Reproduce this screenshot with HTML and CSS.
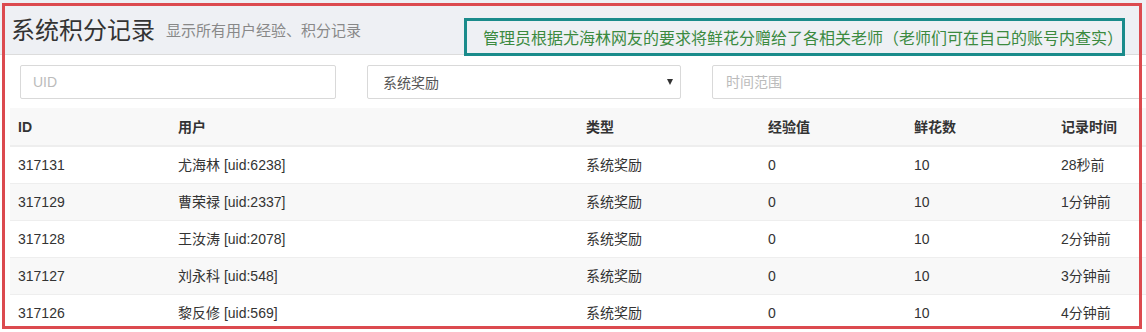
FILE: index.html
```html
<!DOCTYPE html>
<html>
<head>
    <meta charset="utf-8">
    <title>系统积分记录</title>
    <link rel="stylesheet" href="styles.css">
</head>
<body>
<div class="page">

    <div class="page-header">
        <h1>系统积分记录</h1>
        <small>显示所有用户经验、积分记录</small>
        <div class="note">管理员根据尤海林网友的要求将鲜花分赠给了各相关老师（老师们可在自己的账号内查实）</div>
    </div>

    <div class="filters">
        <input type="text" class="field field-uid" placeholder="UID">
        <div class="field field-select">
            <span>系统奖励</span>
            <span class="caret"></span>
        </div>
        <input type="text" class="field field-time" placeholder="时间范围">
    </div>

    <table class="records">
        <colgroup>
            <col style="width:160px">
            <col style="width:408px">
            <col style="width:182px">
            <col style="width:146px">
            <col style="width:147px">
            <col>
        </colgroup>
        <thead>
            <tr>
                <th>ID</th>
                <th>用户</th>
                <th>类型</th>
                <th>经验值</th>
                <th>鲜花数</th>
                <th>记录时间</th>
            </tr>
        </thead>
        <tbody>
            <tr>
                <td>317131</td>
                <td>尤海林 [uid:6238]</td>
                <td>系统奖励</td>
                <td>0</td>
                <td>10</td>
                <td>28秒前</td>
            </tr>
            <tr>
                <td>317129</td>
                <td>曹荣禄 [uid:2337]</td>
                <td>系统奖励</td>
                <td>0</td>
                <td>10</td>
                <td>1分钟前</td>
            </tr>
            <tr>
                <td>317128</td>
                <td>王汝涛 [uid:2078]</td>
                <td>系统奖励</td>
                <td>0</td>
                <td>10</td>
                <td>2分钟前</td>
            </tr>
            <tr>
                <td>317127</td>
                <td>刘永科 [uid:548]</td>
                <td>系统奖励</td>
                <td>0</td>
                <td>10</td>
                <td>3分钟前</td>
            </tr>
            <tr>
                <td>317126</td>
                <td>黎反修 [uid:569]</td>
                <td>系统奖励</td>
                <td>0</td>
                <td>10</td>
                <td>4分钟前</td>
            </tr>
        </tbody>
    </table>

    <!-- red marker drawn over the screenshot -->
    <div class="frame"></div>
</div>
</body>
</html>
```

FILE: styles.css
```css
body {
    margin: 0;
    background: #fff;
    font-family: "Liberation Sans", "Noto Sans CJK SC", sans-serif;
    font-size: 14px;
    color: #333;
}

.page {
    position: relative;
    width: 1146px;
    height: 332px;
    overflow: hidden;
}

.frame {
    position: absolute;
    left: 2px;
    top: 3px;
    width: 1140px;
    height: 326px;
    box-sizing: border-box;
    border: 3px solid #dc4a4f;
    pointer-events: none;
}

.page-header {
    display: flex;
    align-items: flex-start;
    height: 54px;
    padding-left: 11px;
    background: #eef0f4;
    border-bottom: 1px solid #dcdcdc;
}

.page-header h1 {
    margin: 15px 0 0 0;
    font-family: "Noto Sans CJK SC", sans-serif;
    font-size: 24px;
    font-weight: normal;
    line-height: 28px;
    color: #333;
}

.page-header small {
    margin: 20px 0 0 11px;
    font-family: "Noto Sans CJK SC", sans-serif;
    font-size: 15px;
    line-height: 20px;
    color: #888;
}

.note {
    position: relative;
    margin: 18px 21px 0 auto;
    width: 661px;
    height: 38px;
    box-sizing: border-box;
    padding-left: 16px;
    border: 3px solid #1a8b8b;
    background: #eef0f4;
    font-family: "Noto Sans CJK SC", sans-serif;
    font-size: 16px;
    line-height: 32px;
    color: #3b8a3f;
    white-space: nowrap;
}

.filters {
    display: flex;
    gap: 31px;
    padding: 10px 0 9px 20px;
}

.field {
    flex: none;
    box-sizing: border-box;
    height: 34px;
    margin: 0;
    border: 1px solid #d9d9d9;
    border-radius: 2px;
    background: #fff;
    font-family: "Liberation Sans", "Noto Sans CJK SC", sans-serif;
    font-size: 14px;
    color: #555;
    outline: none;
}

.field::placeholder {
    color: #bbb;
}

.field-uid {
    width: 316px;
    padding: 0 12px;
}

.field-select {
    display: flex;
    align-items: center;
    justify-content: space-between;
    width: 314px;
    padding: 0 7px 0 15px;
}

.caret {
    width: 0;
    height: 0;
    border-left: 3.5px solid transparent;
    border-right: 3.5px solid transparent;
    border-top: 6px solid #333;
}

.field-time {
    width: 460px;
    padding: 0 13px;
}

.records {
    margin-left: 10px;
    width: 1136px;
    table-layout: fixed;
    border-collapse: collapse;
}

.records th,
.records td {
    padding: 8px;
    line-height: 20px;
    text-align: left;
    white-space: nowrap;
}

.records th {
    padding-top: 9px;
    font-weight: bold;
    background: #f8f8f8;
    border-bottom: 2px solid #eee;
}

.records td {
    border-top: 1px solid #eee;
}

.records tbody tr:nth-child(even) td {
    background: #f8f8f8;
}
```
